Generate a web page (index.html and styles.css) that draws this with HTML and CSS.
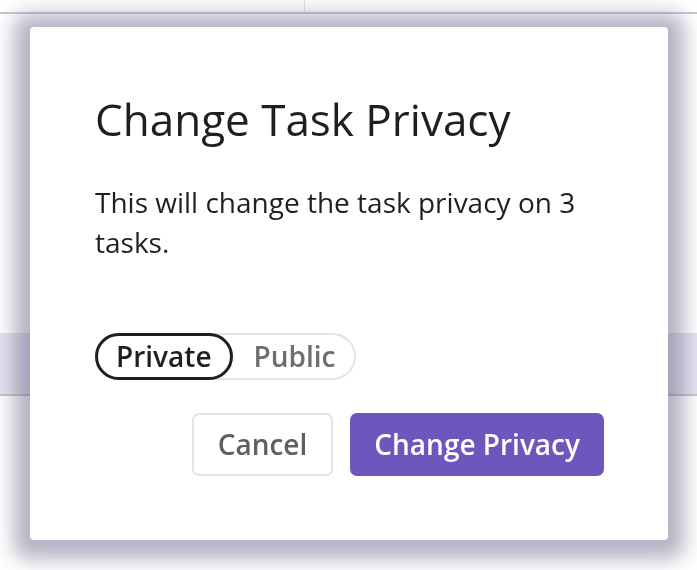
FILE: index.html
```html
<!DOCTYPE html>
<html lang="en">
<head>
<meta charset="utf-8">
<title>Change Task Privacy</title>
<link rel="stylesheet" href="styles.css">
</head>
<body>
<div class="page">
  <div class="topbar">
    <div class="topbar-left"></div>
    <div class="topbar-right"></div>
  </div>
  <div class="page-body"></div>
  <div class="band"></div>
</div>
<div class="overlay">
  <div class="modal" role="dialog" aria-labelledby="modal-title">
    <h1 class="modal-title" id="modal-title">Change Task Privacy</h1>
    <p class="modal-text">This will change the task privacy on 3 tasks.</p>
    <div class="segmented">
      <button class="seg seg-active" type="button">Private</button>
      <button class="seg" type="button">Public</button>
    </div>
    <div class="actions">
      <button class="btn btn-secondary" type="button">Cancel</button>
      <button class="btn btn-primary" type="button">Change Privacy</button>
    </div>
  </div>
</div>
</body>
</html>
```
FILE: styles.css
```css
* {
  box-sizing: border-box;
}

html, body {
  margin: 0;
  padding: 0;
  background: #ffffff;
  font-family: "Open Sans", "Noto Sans", "Liberation Sans", sans-serif;
  color: #1e1f21;
  overflow: hidden;
}

.page {
  width: 697px;
  height: 570px;
}

.topbar {
  display: flex;
  height: 14px;
  border-bottom: 2px solid #c9c8d2;
}

.topbar-left {
  width: 305px;
  border-right: 1px solid #e4e4e8;
}

.topbar-right {
  flex: 1;
}

.page-body {
  height: 319px;
}

.band {
  height: 63px;
  background: #e6e4f0;
  border-bottom: 2px solid #c7c5d2;
}

.overlay {
  position: fixed;
  inset: 0;
  padding: 27px 0 0 30px;
}

.modal {
  width: 638px;
  background: #ffffff;
  border-radius: 4px;
  padding: 66px 64px 64px 65px;
  box-shadow: 0 3px 20px 16px rgba(60, 55, 100, 0.38);
}

.modal-title {
  margin: 0 0 36px;
  font-size: 44px;
  line-height: 53px;
  font-weight: 400;
  color: #1e1f21;
}

.modal-text {
  margin: 0;
  font-size: 28px;
  line-height: 40px;
  color: #1e1f21;
}

.segmented {
  display: flex;
  width: max-content;
  margin-top: 71px;
  border-radius: 999px;
  box-shadow: inset 0 0 0 2px #e4e4e4;
}

.seg {
  font-family: inherit;
  font-size: 28px;
  font-weight: 600;
  line-height: 41px;
  padding: 0 18px;
  margin: 0;
  border: 3px solid transparent;
  border-radius: 999px;
  background: transparent;
  color: #6d6e6f;
  cursor: pointer;
}

.seg-active {
  border-color: #1e1f21;
  color: #1e1f21;
}

.actions {
  display: flex;
  justify-content: flex-end;
  gap: 17px;
  margin-top: 33px;
}

.btn {
  font-family: inherit;
  font-size: 28px;
  font-weight: 600;
  line-height: 41px;
  padding: 9px 24px;
  margin: 0;
  border: 2px solid;
  border-radius: 7px;
  cursor: pointer;
}

.btn-secondary {
  background: #ffffff;
  border-color: #e3e3e3;
  color: #5f5f60;
}

.btn-primary {
  padding-left: 22px;
  padding-right: 22px;
  background: #6d57bd;
  border-color: #6d57bd;
  color: #ffffff;
}
```
